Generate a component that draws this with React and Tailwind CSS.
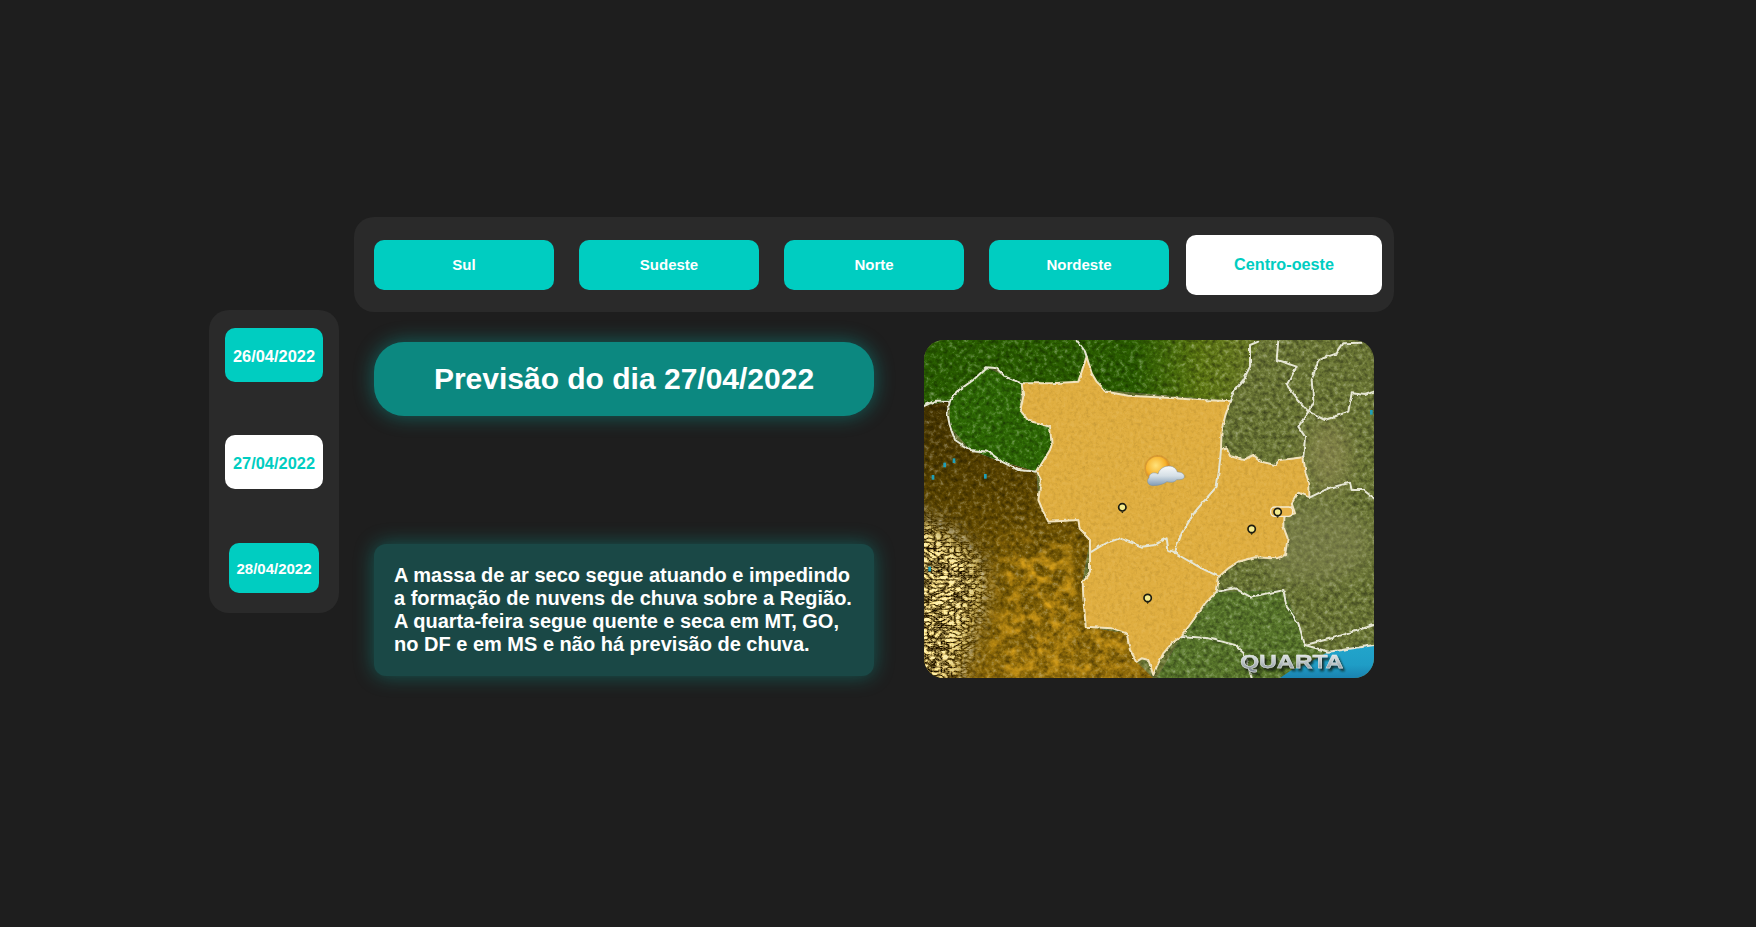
const regions = ['Sul', 'Sudeste', 'Norte', 'Nordeste'];

// all map points are in a 3x space, origin at 27,30 (viewBox below)
const goldRegion =
  '515,80 530,130 545,155 575,185 640,197 700,200 780,205 850,210 945,213 930,260 920,300 918,360 935,355 945,378 985,390 1015,375 1040,395 1080,405 1095,390 1165,382 1172,430 1183,460 1183,503 1150,488 1130,520 1140,550 1105,560 1105,590 1118,625 1110,675 1085,685 1020,682 970,695 940,715 912,740 905,785 870,820 835,870 800,918 770,940 745,970 725,1010 715,1035 700,990 680,985 665,995 645,960 635,910 590,895 512,890 505,800 503,755 525,725 525,630 495,600 490,570 400,575 385,545 370,510 378,450 365,425 405,360 410,345 405,290 370,280 340,272 315,240 325,200 320,160 410,160 490,155 505,110';

const borders = [
  '918,360 912,420 905,470 870,510 840,545 800,610 785,650 780,670',
  '912,740 860,715 790,675 775,665 760,660 755,625 720,645 680,650 640,635 615,625 570,640 530,665',
  '27,228 60,212 105,212 97,250 105,290 120,330 165,360 220,365 260,395 310,420 365,425',
  '105,212 125,185 175,150 215,112 245,115 270,140 320,160',
  '485,30 510,65 515,80',
  '1030,35 1005,45 1005,110 985,150 955,185 945,213',
  '1090,30 1085,90 1145,110 1115,165 1150,210 1180,245 1150,290 1170,320 1165,382',
  '1340,38 1285,40 1265,70 1210,90 1190,150 1195,215 1180,245 1230,270 1300,245 1310,190 1350,195 1377,185',
  '1183,503 1240,475 1305,458 1310,480 1345,480 1377,505',
  '905,785 960,775 1005,800 1060,790 1105,780 1115,830 1150,880 1170,945 1250,925 1377,885',
  '800,918 880,925 960,945 985,965 1010,1044',
  '1170,945 1240,965 1280,960 1377,945',
];

const cities = [[622, 532], [1010, 597], [1088, 546], [698, 804]];

const RegionMap = () => (
  <svg viewBox="27 30 1350 1014" className="block h-full w-full">
    <defs>
      <linearGradient id="northGreen" x1="0" x2="1" y1="0" y2="0">
        <stop offset="0" stopColor="#2a6000" />
        <stop offset="0.62" stopColor="#2c6000" />
        <stop offset="0.82" stopColor="#5f7a12" />
        <stop offset="1" stopColor="#6f7c2c" />
      </linearGradient>
      <linearGradient id="westGold" x1="0" x2="0.25" y1="0" y2="1">
        <stop offset="0" stopColor="#463500" />
        <stop offset="0.35" stopColor="#5e4700" />
        <stop offset="0.7" stopColor="#7d5e04" />
        <stop offset="1" stopColor="#8e6a08" />
      </linearGradient>
      <linearGradient id="sea" x1="0" x2="0" y1="0" y2="1">
        <stop offset="0" stopColor="#22a5cb" />
        <stop offset="0.6" stopColor="#1f9dc6" />
        <stop offset="1" stopColor="#1a82b0" />
      </linearGradient>
      <linearGradient id="quartaFill" x1="0" x2="0" y1="0" y2="1">
        <stop offset="0" stopColor="#f2f4f4" />
        <stop offset="0.55" stopColor="#b9c1c4" />
        <stop offset="1" stopColor="#78828a" />
      </linearGradient>
      <radialGradient id="sun" cx="0.42" cy="0.38" r="0.65">
        <stop offset="0" stopColor="#ffe27a" />
        <stop offset="0.65" stopColor="#f7b32c" />
        <stop offset="1" stopColor="#cf6f12" />
      </radialGradient>
      <linearGradient id="cloud" x1="0" x2="0" y1="0" y2="1">
        <stop offset="0" stopColor="#f8fafb" />
        <stop offset="0.5" stopColor="#d5dfe6" />
        <stop offset="1" stopColor="#7f9ab5" />
      </linearGradient>
      <filter id="terrain" x="0" y="0" width="100%" height="100%" colorInterpolationFilters="sRGB">
        <feTurbulence type="fractalNoise" baseFrequency="0.07" numOctaves="4" seed="7" result="n" />
        <feColorMatrix in="n" type="matrix" values="0.5 0 0 0 0.22 0.5 0 0 0 0.22 0.5 0 0 0 0.22 0 0 0 0 1" result="g" />
        <feBlend in="SourceGraphic" in2="g" mode="overlay" result="b" />
        <feComposite in="b" in2="SourceAlpha" operator="in" />
      </filter>
      <filter id="soft" x="0" y="0" width="100%" height="100%" colorInterpolationFilters="sRGB">
        <feTurbulence type="fractalNoise" baseFrequency="0.09" numOctaves="3" seed="3" result="n" />
        <feColorMatrix in="n" type="matrix" values="0.12 0 0 0 0.44 0.12 0 0 0 0.44 0.12 0 0 0 0.44 0 0 0 0 1" result="g" />
        <feBlend in="SourceGraphic" in2="g" mode="overlay" result="b" />
        <feComposite in="b" in2="SourceAlpha" operator="in" />
      </filter>
      <filter id="patches" x="-25%" y="-25%" width="150%" height="150%" colorInterpolationFilters="sRGB">
        <feGaussianBlur in="SourceGraphic" stdDeviation="40" result="blur" />
        <feTurbulence type="fractalNoise" baseFrequency="0.025" numOctaves="5" seed="11" result="n" />
        <feColorMatrix in="n" type="matrix" values="0 0 0 0 1 0 0 0 0 1 0 0 0 0 1 2.8 0 0 0 -1.2" result="a" />
        <feComposite in="blur" in2="a" operator="in" />
      </filter>
      <filter id="ridges" x="-30%" y="-30%" width="160%" height="160%" colorInterpolationFilters="sRGB">
        <feTurbulence type="turbulence" baseFrequency="0.05 0.08" numOctaves="3" seed="5" result="n" />
        <feColorMatrix in="n" type="matrix" values="2.2 0 0 0 -0.05 2.2 0 0 0 -0.1 2.2 0 0 0 -0.25 0 0 0 0 1" result="g" />
        <feBlend in="g" in2="SourceGraphic" mode="multiply" result="b" />
        <feGaussianBlur in="b" stdDeviation="1.6" result="bb" />
        <feGaussianBlur in="SourceAlpha" stdDeviation="34" result="fade" />
        <feComposite in="bb" in2="fade" operator="in" />
      </filter>
      <filter id="wiggle" x="27" y="30" width="1350" height="1014" filterUnits="userSpaceOnUse" colorInterpolationFilters="sRGB">
        <feTurbulence type="fractalNoise" baseFrequency="0.045" numOctaves="3" seed="2" result="n" />
        <feDisplacementMap in="SourceGraphic" in2="n" scale="10" xChannelSelector="R" yChannelSelector="G" />
      </filter>
      <filter id="tanBlur" x="-40%" y="-40%" width="180%" height="180%">
        <feGaussianBlur stdDeviation="34" />
      </filter>
      <filter id="quartaShadow" x="-10%" y="-20%" width="120%" height="160%">
        <feDropShadow dx="6" dy="8" stdDeviation="3" floodColor="#0b1208" floodOpacity="0.85" />
      </filter>
    </defs>

    <rect x="27" y="30" width="1350" height="1014" fill="#6e7a36" filter="url(#terrain)" />
    <ellipse cx="1240" cy="380" rx="70" ry="110" fill="#a89a68" opacity="0.4" filter="url(#tanBlur)" />
    <ellipse cx="1200" cy="640" rx="170" ry="120" fill="#8a8a5c" opacity="0.45" filter="url(#tanBlur)" />
    <polygon points="27,30 1040,30 1005,110 955,185 945,213 320,160 270,140 245,115 215,112 105,212 27,228" fill="url(#northGreen)" filter="url(#terrain)" />
    <polygon points="105,212 215,112 320,160 315,240 405,290 410,345 365,425 260,395 165,360 105,290" fill="#2f6b04" filter="url(#terrain)" />
    <polygon points="27,228 105,212 97,250 120,330 165,360 260,395 365,425 370,510 400,575 490,570 525,630 503,755 512,890 635,910 665,995 715,1044 27,1044" fill="url(#westGold)" filter="url(#terrain)" />
    <polygon points="260,640 470,620 500,800 510,890 630,910 660,1000 700,1044 210,1044" fill="#d9a11a" filter="url(#patches)" />
    <polygon points="-60,530 90,600 190,680 205,790 170,900 115,1100 -60,1100" fill="#fff0b0" filter="url(#ridges)" />
    <polygon points="800,918 905,785 1105,780 1150,880 1170,945 1240,965 1095,1044 725,1044" fill="#5b7a2c" filter="url(#terrain)" />
    <polygon points="1095,1044 1130,1020 1180,1000 1240,965 1280,960 1377,945 1377,1044" fill="url(#sea)" />

    <g filter="url(#wiggle)">
      <polygon points={goldRegion} fill="#e0ae3f" filter="url(#soft)" />
      <polygon points={goldRegion} fill="none" stroke="#f1e3bd" strokeWidth="6" strokeLinejoin="round" />
      {borders.map((line) => (
        <polyline key={line} points={line} fill="none" stroke="#e6e6d4" strokeWidth="6" strokeLinejoin="round" strokeLinecap="round" />
      ))}
    </g>

    <rect x="1067" y="531" width="66" height="28" rx="12" fill="#e8b44a" stroke="#f5ecd0" strokeWidth="4" />

    {[[113, 385], [50, 435], [207, 432], [40, 710], [1365, 240], [85, 398]].map(([x, y]) => (
      <rect key={x} x={x} y={y} width="8" height="14" fill="#1f9fb8" />
    ))}

    {cities.map(([x, y]) => (
      <g key={x}>
        <circle cx={x} cy={y} r="11" fill="#f4eb8e" stroke="#1c1c10" strokeWidth="5" />
        <path d={`M${x - 4} ${y + 13}h8l-4 5z`} fill="#1c1c10" />
      </g>
    ))}

    {/* weather icon */}
    <circle cx="728" cy="415" r="40" fill="#c9761a" opacity="0.35" />
    <circle cx="728" cy="415" r="35" fill="url(#sun)" />
    <path
      d="M716 467c-16 1-24-13-14-24 0-13 16-19 27-11 5-20 28-28 44-22 9 4 13 11 14 16 15-1 22 8 21 15-1 6-9 9-23 8-6 9-19 9-29 6-12 9-26 11-40 12z"
      fill="url(#cloud)"
      stroke="#7d8f9c"
      strokeWidth="1.5"
    />

    <text
      x="975"
      y="1014"
      textLength="310"
      lengthAdjust="spacingAndGlyphs"
      fontFamily="'Liberation Sans', Arial, sans-serif"
      fontWeight="700"
      fontSize="56"
      fill="url(#quartaFill)"
      stroke="#e8ecec"
      strokeWidth="1"
      filter="url(#quartaShadow)"
    >
      QUARTA
    </text>
  </svg>
);

const App = () => {
  return (
    <div className="min-h-screen w-full bg-[#1e1e1e] pl-[209px] pt-[217px] font-['Liberation_Sans',Arial,sans-serif] font-bold text-white">
      <div className="flex items-start gap-[15px]">
        <aside className="mt-[93px] flex h-[303px] w-[130px] flex-col items-center rounded-[20px] bg-[#2a2a2a] pt-[18px]">
          <button className="h-[54px] w-[98px] rounded-[10px] bg-[#00cdc1] pt-[2px] text-[16.4px] whitespace-nowrap">26/04/2022</button>
          <button className="mt-[53px] h-[54px] w-[98px] rounded-[10px] bg-white pt-[2px] text-[16.4px] whitespace-nowrap text-[#00cdc1]">27/04/2022</button>
          <button className="mt-[54px] h-[50px] w-[90px] rounded-[10px] bg-[#00cdc1] pt-[2px] text-[15px] whitespace-nowrap">28/04/2022</button>
        </aside>

        <main className="w-[1040px]">
          <nav className="flex h-[95px] items-center gap-[25px] rounded-[20px] bg-[#2a2a2a] pl-5">
            {regions.map((name) => (
              <button key={name} className="h-[50px] w-[180px] rounded-[10px] bg-[#00cdc1] pt-px text-[15px]">
                {name}
              </button>
            ))}
            <button className="ml-[-8px] h-[60px] w-[196px] rounded-[10px] bg-white text-[16.2px] text-[#00cdc1]">
              Centro-oeste
            </button>
          </nav>

          <section className="mt-[28px] flex items-start pl-5">
            <div className="w-[500px] pt-[2px]">
              <h1 className="flex h-[74px] items-center justify-center rounded-[30px] bg-[#0c8880] pb-[2px] text-[30px] shadow-[0_0_20px_rgba(0,205,193,0.4)]">
                Previsão do dia 27/04/2022
              </h1>
              <p className="mt-[128px] h-[132px] rounded-[12px] bg-[#1a4846] px-5 py-5 text-[20px] leading-[23px] shadow-[0_0_20px_rgba(0,205,193,0.35)]">
                A massa de ar seco segue atuando e impedindo a formação de nuvens de chuva sobre a Região. A quarta-feira segue quente e seca em MT, GO, no DF e em MS e não há previsão de chuva.
              </p>
            </div>
            <div className="ml-[50px] h-[338px] w-[450px] overflow-hidden rounded-[20px]">
              <RegionMap />
            </div>
          </section>
        </main>
      </div>
    </div>
  );
};

export default App;
